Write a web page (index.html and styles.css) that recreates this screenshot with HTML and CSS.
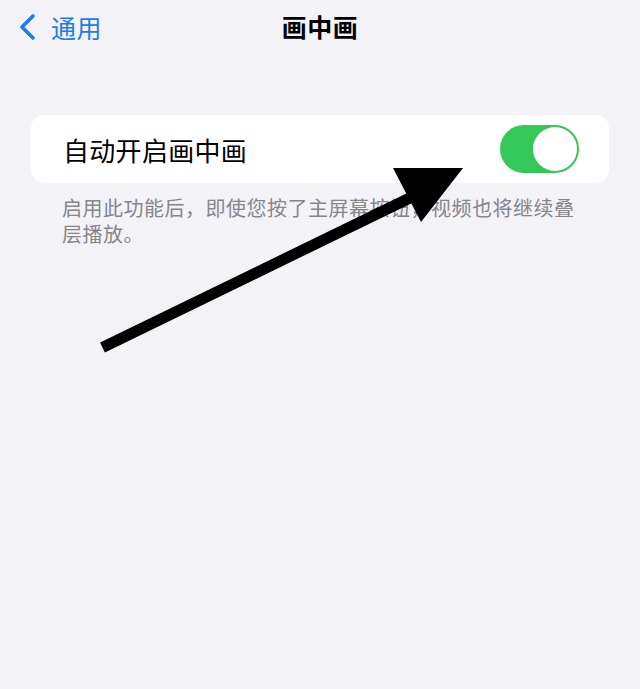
FILE: index.html
```html
<!DOCTYPE html>
<html lang="zh-CN">
<head>
<meta charset="utf-8">
<title>画中画</title>
<link rel="stylesheet" href="styles.css">
</head>
<body>
<div class="screen">
  <header class="nav">
    <a class="back" href="#">
      <svg class="chevron" width="18" height="28" viewBox="0 0 18 28">
        <path d="M15 3 L4 14 L15 25" fill="none" stroke="#1a7cf0" stroke-width="3.6" stroke-linecap="round" stroke-linejoin="round"/>
      </svg>
      <span class="back-label">通用</span>
    </a>
    <h1 class="title">画中画</h1>
  </header>

  <section class="group">
    <div class="cell">
      <span class="cell-label">自动开启画中画</span>
      <span class="switch on"><span class="knob"></span></span>
    </div>
  </section>
  <p class="footnote">启用此功能后，即使您按了主屏幕按钮，视频也将继续叠层播放。</p>

  <svg class="annotation" width="640" height="689" viewBox="0 0 640 689">
    <line x1="102.5" y1="347.5" x2="418" y2="194" stroke="#000" stroke-width="11"/>
    <polygon points="393,168 463,168 421,222" fill="#000"/>
  </svg>
</div>
</body>
</html>
```

FILE: styles.css
```css
* {
  box-sizing: border-box;
}

html, body {
  margin: 0;
  padding: 0;
}

body {
  background: #f2f2f7;
  font-family: "Noto Sans CJK SC", "Noto Sans", sans-serif;
  width: 640px;
  height: 689px;
  overflow: hidden;
}

.screen {
  position: relative;
  width: 640px;
  height: 689px;
}

.nav {
  position: relative;
  height: 54px;
  display: flex;
  align-items: center;
  justify-content: center;
}

.back {
  position: absolute;
  left: 18px;
  top: 12px;
  display: flex;
  align-items: center;
  gap: 15px;
  text-decoration: none;
  color: #1a7cf0;
}

.chevron {
  display: block;
}

.back-label {
  font-size: 25px;
  line-height: 30px;
  letter-spacing: 0.5px;
}

.title {
  margin: 0;
  font-size: 25px;
  font-weight: 700;
  color: #000;
  line-height: 54px;
  position: relative;
  top: -1px;
  letter-spacing: 0.5px;
}

.group {
  margin: 61px 31px 0 31px;
  background: #fff;
  border-radius: 13px;
}

.cell {
  height: 68px;
  display: flex;
  align-items: center;
  justify-content: space-between;
  padding: 0 30px 0 32px;
}

.cell-label {
  font-size: 26px;
  color: #000;
  letter-spacing: 0.3px;
}

.switch {
  width: 79px;
  height: 48px;
  border-radius: 24px;
  background: #34c759;
  display: flex;
  align-items: center;
  padding: 2px;
}

.switch.on {
  justify-content: flex-end;
}

.knob {
  width: 44px;
  height: 44px;
  border-radius: 50%;
  background: #fff;
}

.footnote {
  margin: 12px 62px 0 62px;
  font-size: 20px;
  line-height: 26px;
  color: #86868b;
  letter-spacing: 0.5px;
}

.annotation {
  position: absolute;
  left: 0;
  top: 0;
  pointer-events: none;
}
```
